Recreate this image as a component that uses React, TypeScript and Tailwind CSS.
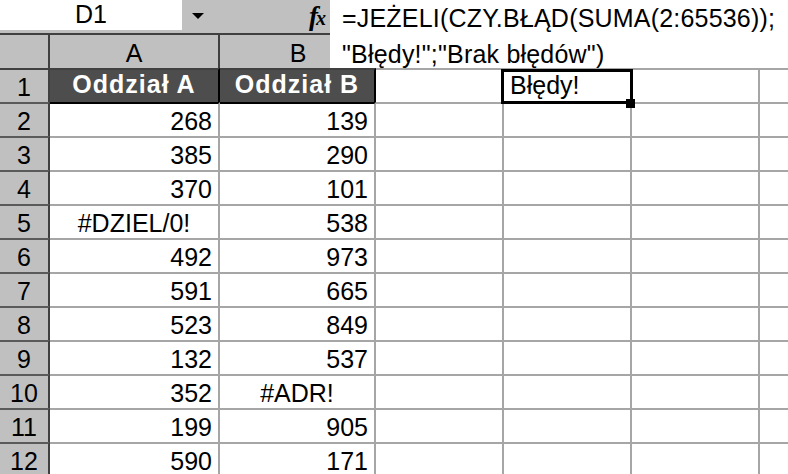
const rows: [string, string][] = [
  ["268", "139"],
  ["385", "290"],
  ["370", "101"],
  ["#DZIEL/0!", "538"],
  ["492", "973"],
  ["591", "665"],
  ["523", "849"],
  ["132", "537"],
  ["352", "#ADR!"],
  ["199", "905"],
  ["590", "171"],
];

const font = "font-['Liberation_Sans',Arial,sans-serif] text-[25px] leading-none text-black";

// error values are centered, numbers go to the right
const isError = (v: string) => v.startsWith("#");

const EmptyCells = ({ top }: { top: string }) => (
  <>
    <div className={`w-[128px] shrink-0 border-t-2 border-r-2 ${top} border-r-[#a6a6a6]`}></div>
    <div className={`w-[128px] shrink-0 border-t-2 border-r-2 ${top} border-r-[#a6a6a6]`}></div>
    <div className={`w-[128px] shrink-0 border-t-2 border-r-2 ${top} border-r-[#a6a6a6]`}></div>
    <div className={`flex-1 border-t-2 ${top}`}></div>
  </>
);

const App = () => {
  return (
    <div className={`w-[788px] h-[474px] overflow-hidden bg-white ${font}`}>
      {/* name box, formula bar and column headers */}
      <div className="flex h-[68px]">
        <div className="w-[330px] shrink-0 flex flex-col bg-[#c0c0c0] overflow-hidden">
          <div className="h-[33px] flex items-start">
            <div className="w-[182px] h-[30px] bg-white flex items-end justify-center pb-[3px]">D1</div>
            <svg width="12" height="6" viewBox="0 0 12 6" className="ml-[10px] mt-[13px]">
              <polygon points="0,0 12,0 6,6" fill="#000" />
            </svg>
            <div className="ml-auto mr-[6px] mt-[3px] font-['Liberation_Serif',serif] italic font-bold text-[27px] leading-none tracking-[-2px]">
              f<span className="text-[20px]">x</span>
            </div>
          </div>
          <div className="h-[2px] bg-[#404040]"></div>
          <div className="h-[33px] flex">
            <div className="w-[50px] shrink-0 border-r-2 border-[#404040]"></div>
            <div className="w-[170px] shrink-0 border-r-2 border-[#404040] flex items-end justify-center pb-[2px]">A</div>
            <div className="w-[156px] shrink-0 flex items-end justify-center pb-[2px]">B</div>
          </div>
        </div>
        <div className="flex-1 bg-white pl-[12px] leading-[36px] whitespace-nowrap tracking-[0.2px]">
          <div>=JEŻELI(CZY.BŁĄD(SUMA(2:65536));</div>
          <div>"Błędy!";"Brak błędów")</div>
        </div>
      </div>

      {/* row 1: headings and the result cell */}
      <div className="flex h-[34px]">
        <div className="w-[50px] shrink-0 bg-[#c0c0c0] border-t-2 border-r-2 border-[#404040] flex items-end justify-center pb-[2px]">1</div>
        <div className="w-[170px] shrink-0 bg-[#4d4d4d] border-t-2 border-t-[#404040] border-r-2 border-r-black flex items-end justify-center pb-[5px] text-white font-bold tracking-[1px]">
          Oddział A
        </div>
        <div className="w-[156px] shrink-0 bg-[#4d4d4d] border-t-2 border-t-[#404040] border-r-2 border-r-black flex items-end justify-center pb-[5px] text-white font-bold tracking-[1px]">
          Oddział B
        </div>
        <div className="w-[128px] shrink-0 border-t-2 border-r-2 border-t-[#a6a6a6] border-r-[#a6a6a6]"></div>
        <div className="w-[128px] shrink-0 border-t-2 border-r-2 border-t-[#a6a6a6] border-r-[#a6a6a6] relative flex items-end pl-[6px] pb-[4px]">
          Błędy!
          <div className="absolute left-[-3px] top-[-1px] w-[132px] h-[35px] border-[3px] border-black">
            <div className="absolute left-[122px] top-[27px] w-[9px] h-[9px] bg-black"></div>
          </div>
        </div>
        <div className="w-[128px] shrink-0 border-t-2 border-r-2 border-t-[#a6a6a6] border-r-[#a6a6a6]"></div>
        <div className="flex-1 border-t-2 border-t-[#a6a6a6]"></div>
      </div>

      {rows.map(([a, b], i) => {
        const top = i === 0 ? "border-t-black" : "border-t-[#a6a6a6]";
        return (
          <div key={i} className="flex h-[34px]">
            <div className="w-[50px] shrink-0 bg-[#c0c0c0] border-t-2 border-t-[#5a5a5a] border-r-2 border-r-[#404040] flex items-end justify-center pb-[2px]">
              {i + 2}
            </div>
            <div
              className={`w-[170px] shrink-0 border-t-2 border-r-2 ${top} border-r-[#a6a6a6] flex items-end pb-[2px] ${
                isError(a) ? "justify-center" : "justify-end pr-[6px]"
              }`}
            >
              {a}
            </div>
            <div
              className={`w-[156px] shrink-0 border-t-2 border-r-2 ${top} border-r-[#a6a6a6] flex items-end pb-[2px] ${
                isError(b) ? "justify-center" : "justify-end pr-[6px]"
              }`}
            >
              {b}
            </div>
            <EmptyCells top="border-t-[#a6a6a6]" />
          </div>
        );
      })}
    </div>
  );
};

export default App;
